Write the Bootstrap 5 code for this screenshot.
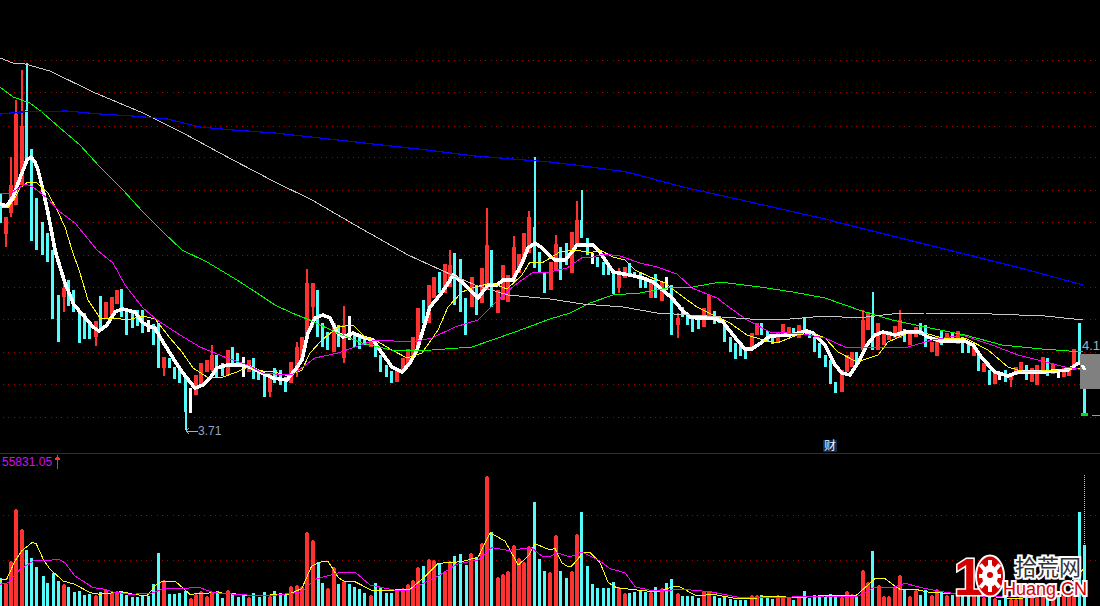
<!DOCTYPE html>
<html lang="zh-CN">
<head>
<meta charset="utf-8">
<title>K线图</title>
<link href="https://cdn.jsdelivr.net/npm/bootstrap@5.3.0/dist/css/bootstrap.min.css" rel="stylesheet">
<style>
html,body{height:100%;margin:0;background:#000;overflow:hidden}
.chart-root{width:1100px;height:606px;font-family:"Liberation Sans","Noto Sans CJK SC",sans-serif;font-size:12px;line-height:1}
.price-pane{height:454px;border-bottom:1px solid #9c0000}
.vol-pane{height:152px}
.pane-svg{display:block;width:100%;height:100%}
.tag-low{left:198px;top:425px;color:#8fa6c8}
.tag-last{left:1082px;top:339px;color:#9db2c8;font-size:13px}
.tag-vol{left:2px;top:456px;color:#d010f0}
.tag-arrow{left:54px;top:454px}
.tag-cai{left:823px;top:440px;width:14px;height:12px;background:#0a2c58;color:#e8f0f8;text-align:center}
.logo-svg{right:0;bottom:0;width:150px;height:60px}
.logo-cn{font-family:"Noto Sans CJK SC",sans-serif;font-size:22px;fill:#333;stroke:#fff;stroke-width:4px;paint-order:stroke}
.logo-en{font-family:"Liberation Sans",sans-serif;font-size:18px;fill:#d40000;stroke:#fff;stroke-width:4px;paint-order:stroke}
.logo-one{font-family:"Liberation Sans",sans-serif;font-weight:700;font-size:52px;fill:#d40000;stroke:#fff;stroke-width:3px;paint-order:stroke}
</style>
</head>
<body>
<div class="chart-root position-relative overflow-hidden bg-black d-flex flex-column">
  <div class="price-pane"><svg id="price" class="pane-svg" viewBox="0 0 1100 453" shape-rendering="crispEdges"></svg></div>
  <div class="vol-pane"><svg id="vol" class="pane-svg" viewBox="0 454 1100 152" shape-rendering="crispEdges"></svg></div>
  <span class="tag-low position-absolute">3.71</span>
  <span class="tag-last position-absolute">4.1</span>
  <span class="tag-vol position-absolute">55831.05</span>
  <svg class="tag-arrow position-absolute" width="7" height="16" viewBox="0 0 7 16"><path d="M3 1h1v14H3zM1 4h5v2H1zM2 3h3v1H2z" fill="#ff3232"/></svg>
  <span class="tag-cai position-absolute">财</span>
  <svg class="logo-svg position-absolute" viewBox="950 546 150 60">
    <text class="logo-one" x="954" y="595" textLength="29" lengthAdjust="spacingAndGlyphs">1</text>
    <ellipse cx="990" cy="576" rx="14" ry="20.5" fill="#d40000" stroke="#fff" stroke-width="2"/>
    <g fill="#fff">
      <ellipse cx="990" cy="576" rx="8" ry="11"/>
      <rect x="988" y="560" width="4" height="32"/>
      <rect x="979" y="574" width="22" height="4"/>
      <rect x="988" y="561" width="4" height="30" transform="rotate(40 990 576)"/>
      <rect x="988" y="561" width="4" height="30" transform="rotate(-40 990 576)"/>
    </g>
    <circle cx="990" cy="575" r="3" fill="#d40000"/>
    <text class="logo-cn" x="1015" y="575">拾荒网</text>
    <text class="logo-en" x="1003" y="595">Huang.CN</text>
  </svg>
</div>
<script src="https://cdn.jsdelivr.net/npm/bootstrap@5.3.0/dist/js/bootstrap.bundle.min.js"></script>
<script>
const C={r:'#ff3232',c:'#54fcfc',w:'#ffffff'};
const price=[];const vol=[];
function rect(o,x,y,w,h,f){o.push(`<rect x="${x}" y="${y}" width="${w}" height="${h}" fill="${f}"/>`)}
function grid(o,ys){ys.forEach(y=>o.push(`<line x1="3" x2="1100" y1="${y}" y2="${y}" stroke="#a80000" stroke-width="1" stroke-dasharray="1 4.3"/>`))}
function line(o,p,col,w){o.push(`<polyline fill="none" stroke="${col}" stroke-width="${w}" stroke-linejoin="round" points="${p}"/>`)}
function zp(off,oy,s){return s.trim().split(/\s+/).map(t=>{const [a,b]=t.split(',').map(Number);return (off+a/3).toFixed(1)+','+(oy+b/3).toFixed(1)}).join(' ')}

function candles(off,scale,s){
  s.trim().split(/\s*;\s*/).forEach(e=>{
    if(!e)return;
    const t=e.split(/\s+/);const x=Math.round(off+(+t[0])/scale);const col=C[t[1]];
    const hi=+t[2],lo=+t[3];const bt=t[4]?+t[4]:hi,bb=t[5]?+t[5]:lo;
    const bw=3;const bx=x-1;
    rect(price,x,hi,2,lo-hi,col);
    rect(price,bx,bt,bw+(t[1]==='r'?1:0),bb-bt,col);
  });
}
grid(price,[60,92,126,157,190,222,255,287,319,352,384,417]);
candles(0,1,`0 c 194 223;5 r 217 247 217 234;10 r 157 217 185 213;15 r 100 205 114 205;21 r 70 185 126 185;26 c 63 160 110 160;31 c 149 241;36 c 198 250;42 c 222 255;47 c 233 262;52 c 250 319;58 c 295 342;63 r 282 312 288 297;68 c 280 306;73 c 290 312;79 c 310 343;84 c 313 339;89 c 323 339;95 r 321 346 321 337;100 c 296 330;105 r 302 318;111 r 297 316;116 r 290 304;121 c 289 317;126 c 311 335;132 c 310 328;137 c 310 326;142 c 310 333;148 w 320 332;153 c 324 345;158 c 323 368;163 r 357 376 357 368;169 c 358 368;174 c 367 379;179 c 370 383;185 c 378 430 378 412;190 w 388 413;195 r 375 395;200 r 363 385;206 r 360 372;211 r 345 372 355 370;216 c 355 377;222 c 363 376;227 r 350 375;232 c 347 365;237 c 353 365;243 w 357 377;248 r 360 372;253 c 358 379;258 c 370 380;264 c 375 397;269 r 374 397 377 392`);
candles(275,3,`-2 c 368 383;0 c 370 380;14 c 370 385;30 c 377 392;45 r 362 383;63 r 342 377 347 370;78 r 337 358;93 r 269 340 283 338;110 r 283 327 283 307;127 c 290 337;142 c 323 347;156 c 332 350;174 r 323 352;188 c 325 347;204 r 306 363 325 358;222 w 316 340;238 c 333 347;252 c 337 349;268 c 337 345;285 r 339 347;300 c 340 357;316 c 355 372;333 c 365 377;349 c 371 383;363 r 370 382;380 r 358 370;396 r 349 367;411 r 337 357;426 r 308 347;444 c 300 323;458 r 285 323;474 r 277 298;492 c 272 293;507 r 264 293;522 r 250 287 265 287;537 c 253 305;555 c 259 312;571 c 298 335;587 r 277 307;603 c 285 315;618 r 268 303;633 r 208 290 245 290;648 c 250 307;665 r 290 313;681 r 265 300;696 r 275 302;713 r 236 282 247 282;728 r 254 273;744 r 233 260;759 r 211 253 217 253;777 c 157 268 227 268;792 c 252 273;808 c 273 293`);
candles(550,3,`0 r 262 290;15 r 235 270 244 270;30 c 247 280;47 c 243 265;62 r 232 273;78 r 201 245 220 245;93 c 190 238 220 238;110 c 238 255;125 w 253 264;141 c 257 267;158 c 262 275;174 c 263 275;190 c 270 294;204 r 268 293 272 288;221 r 267 278;237 c 263 273;252 c 272 278;269 c 273 288;285 c 278 288;300 r 282 298;316 c 274 298;332 r 282 301;348 w 277 290;363 c 285 335;380 r 313 338 318 325;396 c 307 317;411 c 313 325;426 c 316 332;444 c 317 329;459 r 308 327;474 r 295 317;491 c 311 324;506 c 317 323;522 c 322 342;541 c 337 352;555 c 343 359;570 c 343 356;585 c 348 359;603 r 333 350;618 r 323 335;633 c 323 335;651 c 331 342;665 c 338 344;681 r 332 342;695 r 324 335;713 r 327 333;728 c 328 333;743 r 325 338;761 c 318 332;777 c 332 338;793 c 337 352;808 c 343 358`);
candles(825,3,`0 c 355 367;14 c 360 384;30 c 382 393;47 r 370 392;63 r 355 372;78 r 352 367;94 c 352 363;110 r 310 350 320 350;126 r 312 330;141 c 292 350 315 350;157 r 323 350;174 r 333 345;189 r 331 340;206 r 326 338;222 r 310 338 320 338;238 c 329 342;252 r 333 345;269 r 327 337;285 c 323 335;301 c 325 347;317 r 342 352;333 r 337 356;348 c 331 345;363 r 333 343;380 c 333 340;396 r 331 344;411 c 337 353;428 c 342 353;443 r 345 356;459 c 352 371;474 r 363 372;492 c 370 385;507 r 372 384;522 w 373 380;540 c 370 382;555 r 373 387 373 380;571 r 367 375;586 r 362 372;603 c 365 380;618 r 368 382;634 r 365 385;651 r 357 373;666 c 358 376;681 r 364 374;699 w 369 378;714 r 368 377;729 r 367 376;744 r 349 370;762 c 323 363;777 c 364 413`);
line(price,'0,204 7,206 13,197 20,178 27,160 31,157 35,162 38,170 43,190 48,213 55,250 60,267 65,283 74,305 83,315 93,327 99,331 107,325 115,312 122,309 135,312 142,322 148,326 155,328 163,342 173,358 182,372 195,388 203,385 210,378 217,368 227,365 240,365 250,367 260,372 273,378 287,380 295,370 302,360 308,333 315,318 323,315 330,318 337,332 343,337 353,333 362,337 373,340 382,353 392,367 402,372 410,363 417,350 423,330 430,307 440,295 447,285 453,275 462,282 472,292 478,298 488,285 497,285 503,280 513,280 522,263 528,248 535,243 542,248 550,256 555,260 565,260 572,252 577,245 593,245 600,252 613,272 630,275 643,278 653,282 665,292 672,298 682,310 690,317 697,318 713,318 723,322 733,335 745,349 752,349 762,342 770,336 790,335 807,331 813,333 825,345 835,365 842,373 850,375 858,363 867,345 875,335 883,332 895,335 905,332 920,332 928,337 940,341 948,341 965,341 973,345 982,358 995,372 1008,376 1018,372 1042,372 1068,370 1080,362 1085,370','#fff',3.6);
line(price,'0,207 8,208 15,198 20,188 28,182 37,183 48,193 58,212 65,227 72,250 80,273 88,300 100,318 115,318 127,320 143,316 155,319 170,338 182,352 193,368 207,377 223,377 237,372 248,367 263,371 275,372 288,376 302,370 310,353 322,340 338,327 353,325 365,337 375,340 392,350 407,358 422,353 438,330 448,307 462,292 475,287 492,283 507,289 522,275 530,262 542,263 550,258 560,252 577,250 590,253 600,250 613,257 625,260 635,270 650,277 665,283 683,297 697,307 713,315 730,323 747,335 763,340 777,343 797,335 813,333 825,338 838,352 857,362 878,355 888,342 908,333 925,333 942,338 965,338 988,350 1008,367 1025,372 1058,370 1082,368','#ffff00',1);
line(price,'0,193 10,194 25,184 33,187 47,198 60,212 75,223 97,250 113,263 125,285 143,308 157,320 180,335 200,347 227,358 248,365 263,373 275,374 292,375 315,358 338,353 375,340 412,342 432,338 455,327 478,320 495,303 515,285 532,273 550,272 567,268 583,257 593,257 603,254 620,256 640,263 657,267 677,274 692,288 717,298 733,310 747,320 770,332 803,334 825,338 845,347 875,347 908,347 932,340 962,335 992,345 1018,355 1038,360 1065,367 1085,370','#ff00ff',1);
line(price,'0,87 13,97 30,103 43,113 60,128 80,145 100,167 123,190 143,212 163,232 182,250 207,262 237,280 257,293 275,305 292,313 312,321 335,332 362,343 395,351 432,350 472,347 515,332 550,319 570,313 590,303 613,295 640,293 667,288 693,287 720,282 760,287 793,292 825,298 862,311 892,320 925,327 965,335 1002,345 1042,349 1083,352','#00ff00',1);
line(price,'0,58 13,63 25,64 50,71 93,92 143,113 183,133 233,160 275,182 312,200 355,225 408,255 452,275 475,285 508,295 550,299 583,304 623,307 657,313 707,316 750,319 790,319 825,316 858,318 892,314 925,313 992,314 1045,316 1083,320','#c8c8c8',1);
line(price,'0,114 20,112 67,111 100,114 133,116 167,119 200,127 233,130 275,133 427,150 475,156 550,162 583,166 627,172 683,187 750,202 825,219 1028,270 1083,285','#0000ff',1.2);
rect(price,1080,354,20,35,'#808080');
rect(price,1081,413,7,3,'#00e020');
rect(price,1092,415,8,1,'#c8a000');
line(price,'1082,365 1085,370','#fff',3);
rect(price,186,431,12,1,'#b0b0b0');
price.push('<polyline fill="none" stroke="#b0b0b0" points="189,428 186,431 189,434"/>');
document.getElementById('price').innerHTML=price.join('');

function vbars(off,s){
  const t=s.trim().split(/\s*;\s*/);
  t.forEach(e=>{
    if(!e)return;const [z,top,c]=e.split(/\s+/);
    const x=Math.round(off+(+z)/3);const y=Math.round(446+(+top)/3);
    if(c==='r'){rect(vol,x-1,y+1,4,606-y,C.r);rect(vol,x,y,2,1,C.r);}
    else rect(vol,x-1,y,3,606-y,C.c);
  });
}
grid(vol,[515,560]);
vbars(0,`0 397 c;14 410 r;29 345 r;45 190 r;63 250 r;79 312 c;94 336 c;109 363 c;128 390 c;142 411 c;158 381 c;175 405 c;189 413 r;205 423 c;223 438 c;238 435 c;253 447 c;268 443 c;285 448 r;301 438 c;316 428 r;333 437 r;348 436 r;364 436 c;379 447 c;396 453 c;412 453 c;427 448 c;444 450 c;460 414 c;475 321 c;489 401 r;508 444 c;523 444 c;538 441 c;555 435 c;570 455 r;585 443 r;600 436 r;617 451 r;633 437 r;650 435 c;667 455 c;681 433 r;697 445 c;715 453 c;730 447 c;743 454 r;760 441 c;778 452 c;793 438 c;806 449 r;823 435 c`);
vbars(275,`15 441 c;30 448 c;45 419 r;63 416 r;78 421 r;93 257 r;110 281 r;128 349 c;142 411 c;155 425 r;174 364 r;190 414 c;204 405 r;223 414 c;238 423 c;253 429 c;268 441 c;285 446 r;301 411 c;316 423 c;334 441 c;349 441 c;363 433 r;380 425 r;396 413 r;411 401 r;426 362 r;445 360 c;458 338 r;474 341 r;493 350 c;507 374 r;522 346 r;538 330 c;556 324 c;572 357 c;585 320 r;604 336 c;617 290 r;633 89 r;649 258 c;666 392 r;681 383 r;696 374 r;714 296 r;729 335 r;744 348 r;759 299 r;778 168 c;793 339 c;808 375 c;823 377 r`);
vbars(550,`15 266 r;30 375 c;49 396 c;63 374 r;78 263 r;93 198 c;112 360 c;127 414 c;142 426 c;160 426 c;175 426 c;190 408 c;204 423 r;221 440 r;238 441 c;253 437 c;271 435 c;286 437 c;300 438 r;316 423 c;333 425 r;349 411 c;364 399 c;381 441 r;397 450 c;412 450 c;427 450 c;445 456 c;459 434 r;474 436 r;493 449 c;508 456 c;523 453 c;541 459 c;556 462 c;571 462 c;586 462 c;604 446 r;618 446 r;634 447 c;652 455 c;667 459 c;681 446 r;696 452 r;713 452 r;730 462 c;744 452 r;763 435 c;778 455 c;793 447 c;808 450 c;824 452 c`);
vbars(825,`14 444 c;30 453 c;47 453 r;63 434 r;78 445 r;94 453 c;110 373 r;126 409 r;141 315 c;158 418 r;174 451 r;189 451 r;206 423 r;222 388 r;238 431 c;252 451 r;269 432 r;286 447 c;301 433 c;317 448 r;333 430 r;349 438 c;363 447 r;381 447 c;396 447 r;411 442 c;428 447 c;443 447 r;459 446 c;474 453 r;492 447 c;507 456 r;522 462 c;540 456 c;555 459 r;571 459 r;586 451 r;603 450 c;618 449 r;634 449 r;651 447 r;666 460 c;681 449 r;699 447 c;714 447 r;729 447 r;744 447 r;763 198 c;778 297 c`);
const vy=[zp(0,446,'0,403 20,400 45,345 65,315 95,290 108,292 130,340 150,370 190,405 225,415 270,440 300,445 365,437 400,445 440,450 470,415 490,405 525,405 570,445 640,440 690,442 740,448 790,450 825,445'),zp(275,446,'0,445 40,445 80,428 110,360 140,347 160,347 190,395 210,407 240,407 290,433 360,432 405,430 450,392 490,352 560,347 610,333 645,260 690,285 730,357 760,330 780,293 825,312'),zp(550,446,'15,307 35,350 50,360 65,360 100,320 120,320 150,350 175,410 200,425 260,432 320,438 360,425 385,420 440,450 490,445 560,458 610,458 650,450 750,455 825,448'),zp(825,446,'95,447 150,398 180,398 200,413 225,430 270,430 320,440 400,443 570,458 640,452 700,440 775,370')].join(' ');
const vm=[zp(0,446,'0,415 25,410 60,370 100,345 150,343 175,340 195,350 225,390 280,425 305,428 340,438 390,445 455,442 490,428 600,425 640,440 740,447 825,447'),zp(275,446,'0,448 80,438 120,400 200,378 240,378 285,417 360,433 405,432 490,390 545,355 610,342 650,305 700,313 770,305 800,330 825,332'),zp(550,446,'20,320 60,333 95,318 150,345 180,368 225,380 255,422 300,433 350,433 400,430 480,437 560,453 660,455 825,450'),zp(825,446,'100,450 150,423 200,425 240,412 290,425 340,435 400,445 500,452 650,450')].join(' ');
line(vol,vy,'#ffff00',1);
line(vol,vm,'#ff00ff',1);
vol.push('<line x1="1084" x2="1084" y1="475" y2="545" stroke="#e8d800" stroke-dasharray="1 1"/>');
document.getElementById('vol').innerHTML=vol.join('');
</script>
</body>
</html>
